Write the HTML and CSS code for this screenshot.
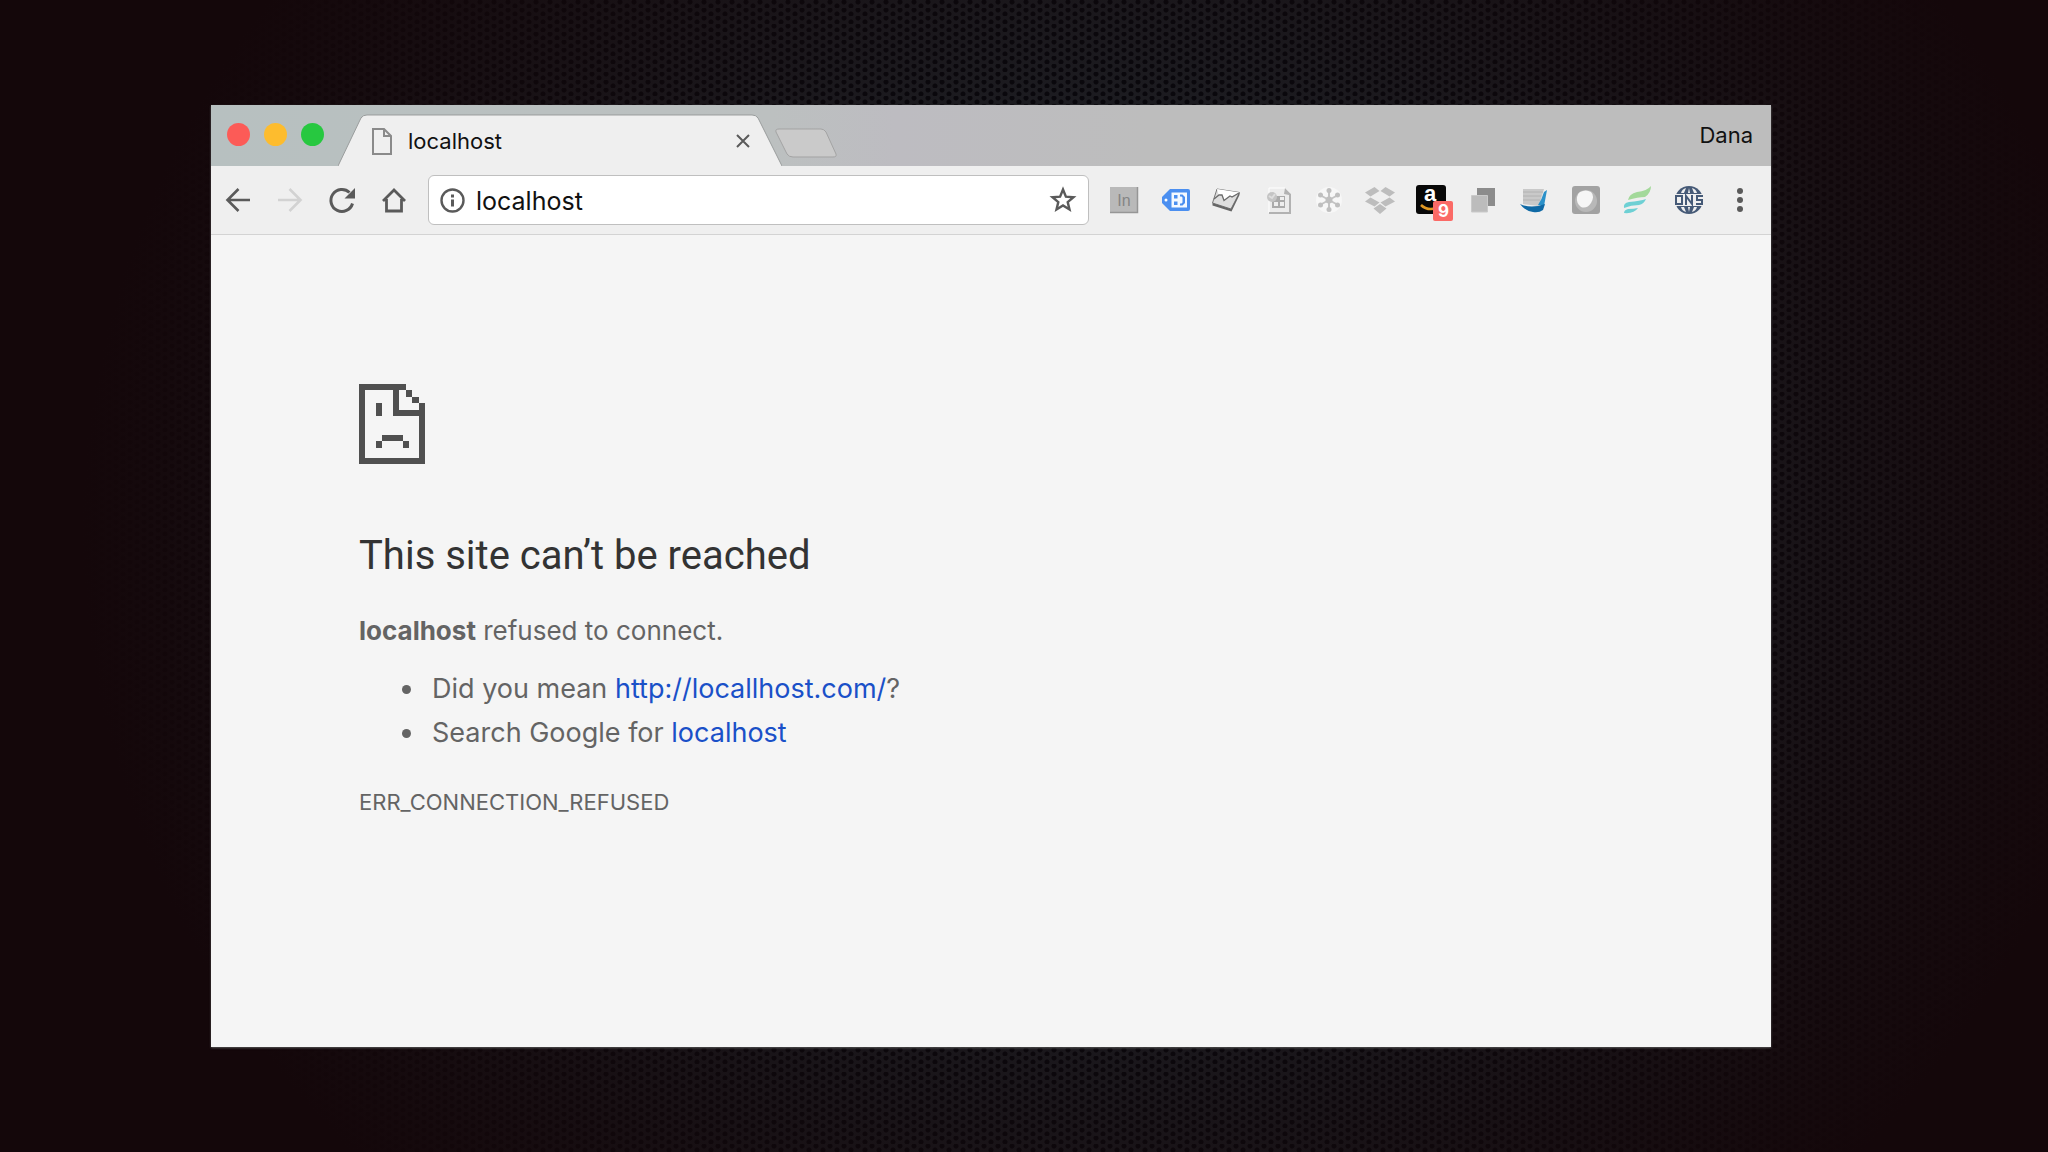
FILE: index.html
```html
<!DOCTYPE html>
<html lang="en">
<head>
    <meta charset="UTF-8">
    <meta name="viewport" content="width=device-width, initial-scale=1.0">
    <title>localhost</title>
    <link rel="stylesheet" href="styles.css">
</head>
<body>
    <div class="window">
        <!-- tab strip -->
        <header class="tab-bar">
            <div class="lights">
                <button class="light red" aria-label="Close window"></button>
                <button class="light yellow" aria-label="Minimize window"></button>
                <button class="light green" aria-label="Zoom window"></button>
            </div>
            <div class="tab">
                <svg class="tab-shape" viewBox="0 0 444 53" preserveAspectRatio="none">
                    <path d="M0 53L23 4Q25 1 29 1H414Q418 1 420 4L444 53" fill="#efefef" stroke="#999c9c"/>
                </svg>
                <svg class="tab-icon" width="20" height="27" viewBox="0 0 20 27" fill="none" stroke="#8a8a8a" stroke-width="2">
                    <path d="M1 1H12L19 8V26H1ZM12 1V8H19"/>
                </svg>
                <span class="tab-title">localhost</span>
                <button class="tab-close" aria-label="Close tab">
                    <svg width="14" height="14" viewBox="0 0 14 14" stroke="#5a5a5a" stroke-width="2"><path d="M1 1L13 13M13 1L1 13"/></svg>
                </button>
            </div>
            <button class="new-tab" aria-label="New tab">
                <svg width="62" height="30" viewBox="0 0 62 30">
                    <path d="M4 1H46Q49 1 51 4L61 26Q62 29 58 29H18Q14 29 12 26L1 4Q0 1 4 1Z" fill="#cacaca" stroke="#a3a3a3"/>
                </svg>
            </button>
            <button class="profile">Dana</button>
        </header>

        <!-- toolbar -->
        <div class="toolbar">
            <nav class="nav">
                <button aria-label="Back">
                    <svg width="30" height="30" viewBox="0 0 30 30" fill="none" stroke="#5a5a5a" stroke-width="2.6"><path d="M27 15H5M15.5 4L4.5 15L15.5 26"/></svg>
                </button>
                <button aria-label="Forward" disabled>
                    <svg width="30" height="30" viewBox="0 0 30 30" fill="none" stroke="#d2d2d2" stroke-width="2.6"><path d="M3 15H25M14.5 4L25.5 15L14.5 26"/></svg>
                </button>
                <button aria-label="Reload">
                    <svg width="30" height="30" viewBox="0 0 30 30"><path d="M25.5 18.5A11 11 0 1 1 22.5 7.5" fill="none" stroke="#5a5a5a" stroke-width="3"/><path d="M28 3V13.5H17.5Z" fill="#5a5a5a"/></svg>
                </button>
                <button aria-label="Home">
                    <svg width="30" height="30" viewBox="0 0 30 30" fill="none" stroke="#5a5a5a" stroke-width="2.8"><path d="M4 16L15 5L26 16M7.5 14V26H22.5V14"/></svg>
                </button>
            </nav>
            <div class="address">
                <svg width="25" height="25" viewBox="0 0 25 25"><circle cx="12.5" cy="12.5" r="11" fill="none" stroke="#5a5a5a" stroke-width="2.4"/><path d="M11 6.5H14V9.5H11ZM11 11.5H14V18.5H11Z" fill="#5a5a5a"/></svg>
                <input type="text" aria-label="Address" value="localhost">
                <button aria-label="Bookmark this page">
                    <svg width="28" height="28" viewBox="0 0 28 28"><path d="M14 3.5L16.9 10.6L24.5 11.2L18.7 16.1L20.5 23.5L14 19.5L7.5 23.5L9.3 16.1L3.5 11.2L11.1 10.6Z" fill="#fff" stroke="#5a5a5a" stroke-width="2.4"/></svg>
                </button>
            </div>
            <div class="extensions">
                <button aria-label="LinkedIn">
                    <svg width="30" height="30" viewBox="-1 0 30 30"><path d="M1 2H29V28H1Z" fill="#b9b9b9"/><path d="M1 27.5H28.5V2" fill="none" stroke="#969696" stroke-width="1.5"/><text x="15" y="21" text-anchor="middle" class="glyph-in">In</text></svg>
                </button>
                <button aria-label="Tag">
                    <svg width="30" height="30" viewBox="-2 0 30 30"><path d="M9 4H27Q29 4 29 6V24Q29 26 27 26H9L1 18V12Z" fill="#4b8ff0"/><circle cx="5" cy="15" r="1.5" fill="#fff"/><path d="M10.5 7.5H26V22.5H10.5Z" fill="#f4f9ff"/><path d="M13 10H16.5V13.5H13ZM13 16.5H16.5V20H13ZM19 9.5H21.5L24 12V18L21.5 20.5H19V18.5H20.5L21.5 17.5V12.5L20.5 11.5H19Z" fill="#4b8ff0"/></svg>
                </button>
                <button aria-label="Mail">
                    <svg width="30" height="30" viewBox="0 0 30 30"><path d="M6 4L28.5 7.5L20 24L1.5 18Z" fill="#dedede" stroke="#777"/><path d="M1.5 18L20 24L28.5 7.5V10L20.5 26.5L1.5 20.5Z" fill="#666"/><path d="M6 4L8 11L11 10L13 15L18 11.5L20 12L28.5 7.5Z" fill="#fff"/><path d="M3 14L8 10L11 10L13 15.5L19 11L21 12L28 8" fill="none" stroke="#6a6a6a" stroke-width="1.3"/></svg>
                </button>
                <button aria-label="Sheets">
                    <svg width="30" height="30" viewBox="-2 0 30 30"><path d="M5 3H21L26 8V28H5Z" fill="#ececec" stroke="#fff"/><path d="M21 3L27 9V29H5V27H25V10L20 9Z" fill="#b2b2b2"/><path d="M8 11H21V23H8Z" fill="#aaa"/><path d="M10 17H14V21H10ZM16 17H20V21H16ZM16 12H20V15H16Z" fill="#eee"/><circle cx="8" cy="12" r="5" fill="#c4c4c4"/><path d="M5 11L8 13L11 9" fill="none" stroke="#ddd" stroke-width="2"/></svg>
                </button>
                <button aria-label="Asterisk">
                    <svg width="30" height="30" viewBox="0 0 30 30"><circle cx="15" cy="15" r="13" fill="#f7f7f7"/><path d="M15 5V25M6 10L24 20M24 10L6 20" stroke="#c3c3c3" stroke-width="2"/><g fill="#bfbfbf"><circle cx="15" cy="15" r="3.5"/><circle cx="15" cy="5.5" r="2.5"/><circle cx="15" cy="24.5" r="2.5"/><circle cx="6.5" cy="10" r="2.5"/><circle cx="23.5" cy="10" r="2.5"/><circle cx="6.5" cy="20" r="2.5"/><circle cx="23.5" cy="20" r="2.5"/></g></svg>
                </button>
                <button aria-label="Dropbox">
                    <svg width="30" height="30" viewBox="0 0 30 30" fill="#bdbdbd"><path d="M9.5 2L14.5 6L5.5 11.5L0 7.5ZM20.5 2L15.5 6L24.5 11.5L30 7.5ZM5.5 12.5L14.5 17.5L9.5 21.5L0 16.5ZM24.5 12.5L15.5 17.5L20.5 21.5L30 16.5ZM15 19L21.5 23.5L15 29L8.5 23.5Z"/></svg>
                </button>
                <button class="amazon" aria-label="Amazon Assistant, 9 alerts">
                    <svg width="30" height="30" viewBox="0 0 30 30"><rect width="30" height="29" rx="3" fill="#080808"/><text x="14" y="16" text-anchor="middle" class="glyph-a">a</text><path d="M5 20Q12 27 24 22" fill="none" stroke="#e29a24" stroke-width="2.5"/></svg>
                    <span class="badge">9</span>
                </button>
                <button aria-label="Tabs">
                    <svg width="30" height="30" viewBox="0 0 30 30"><path d="M9 3H27V21H9Z" fill="#8c8c8c"/><path d="M3.5 10.5H19.5V27H3.5Z" fill="#bcbcbc" stroke="#cacaca"/></svg>
                </button>
                <button aria-label="Reader">
                    <svg width="30" height="30" viewBox="0 0 30 30"><path d="M4 4H25L20 21L4 19Z" fill="#c9c9c9"/><path d="M4 7H24M4 11H22M4 15H21" stroke="#b2b2b2"/><path d="M25 7L28 5L25 21L19 20Q23 14 25 7Z" fill="#2b91c9"/><path d="M1 19Q12 24 26 19L24 25Q20 28 14 27Q6 26 1 19Z" fill="#0f69a5"/></svg>
                </button>
                <button aria-label="Notes">
                    <svg width="30" height="30" viewBox="0 0 30 30"><rect x="1" y="1" width="28" height="28" rx="3" fill="#a2a2a2"/><circle cx="15" cy="16" r="11" fill="#b8b8b8"/><path d="M9 7Q15 4 20 7Q24 11 20 18Q16 24 10 22Q5 18 6 12Q7 8 9 7Z" fill="#f6f6f6"/></svg>
                </button>
                <button aria-label="Feather">
                    <svg width="30" height="30" viewBox="0 0 30 30"><path d="M29 1Q29 8 23 12Q16 12 6 15Q7 9 15 7Q25 6 29 1Z" fill="#a3d99a"/><path d="M24 14Q22 19 17 20Q9 20 2 23Q1 18 7 17Q18 16 24 14Z" fill="#6ed0d4"/><path d="M16 23Q12 29 2 28Q2 25 6 24Q12 24 16 23Z" fill="#6ed0d4"/></svg>
                </button>
                <button aria-label="ONS">
                    <svg width="30" height="30" viewBox="-1 0 30 30"><circle cx="15" cy="15" r="14" fill="#465a77"/><path d="M7 8Q8 4 12 3L10 8ZM14 8L15 3L16 8ZM20 8L18 3Q22 4 23 8ZM7 22Q8 26 12 27L10 22ZM14 22L15 27L16 22ZM20 22L18 27Q22 26 23 22Z" fill="#efefef"/><path d="M0 9H30V21H0Z" fill="#efefef"/><path d="M2 11H8V19H2ZM12 20V11L18 19V10M29 11H23V15H28V19H22" fill="none" stroke="#465a77" stroke-width="2"/></svg>
                </button>
                <button aria-label="Menu">
                    <svg width="30" height="30" viewBox="0 0 30 30" fill="#5a5a5a"><circle cx="15" cy="6" r="3"/><circle cx="15" cy="15" r="3"/><circle cx="15" cy="24" r="3"/></svg>
                </button>
            </div>
        </div>

        <!-- error page -->
        <main class="page">
            <svg class="sad" width="66" height="80" viewBox="0 0 198 240" fill="#505050" shape-rendering="crispEdges">
                <path d="M0 0H141V18H121V78H180V57H198V240H0ZM18 18V222H180V96H102V18Z" fill-rule="evenodd"/>
                <path d="M141 18H159V38H141ZM159 38H180V57H159ZM51 57H70V96H51ZM70 153H131V172H70ZM51 172H70V192H51ZM131 172H150V192H131Z"/>
            </svg>
            <h1>This site can’t be reached</h1>
            <p><strong>localhost</strong> refused to connect.</p>
            <ul>
                <li>Did you mean <a href="http://locallhost.com/">http://locallhost.com/</a>?</li>
                <li>Search Google for <a href="https://www.google.com/search?q=localhost">localhost</a></li>
            </ul>
            <div class="error-code">ERR_CONNECTION_REFUSED</div>
        </main>
    </div>
</body>
</html>
```
FILE: styles.css
```css
* {
    box-sizing: border-box;
}
body {
    margin: 0;
    min-height: 100vh;
    padding: 105px 277px 105px 211px;
    display: flex;
    font-family: Inter, "Liberation Sans", sans-serif;
    background-color: #14070a;
    /* mesh holes under a vignette */
    background-image:
        radial-gradient(ellipse 50% 80% at 54% 46%, rgba(20, 7, 10, 0) 40%, #14070a 100%),
        radial-gradient(circle at 4px 2px, #08080d 2px, transparent 3px),
        radial-gradient(circle at 11px 6px, #08080d 2px, transparent 3px),
        linear-gradient(#1d1e23, #1d1e23);
    background-size: 100% 100%, 14px 8px, 14px 8px, 100% 100%;
}
button {
    padding: 0;
    border: 0;
    background: none;
    font: inherit;
    color: inherit;
}
svg {
    display: block;
}
.window {
    flex: 1;
    display: flex;
    flex-direction: column;
    background: #f5f5f5;
    box-shadow: 0 1px 2px #555;
}

/* tab strip */
.tab-bar {
    display: flex;
    height: 61px;
    padding: 9px 18px 0 16px;
    background: linear-gradient(90deg, #b7c0c0, #bcc0c0 36%, #bdbcc1 44%, #bdbdbd 60%);
}
.lights {
    display: flex;
    gap: 14px;
    padding: 9px 14px 0 0;
}
.light {
    width: 23px;
    height: 23px;
    border-radius: 50%;
}
.red {
    background: #fc5b57;
}
.yellow {
    background: #fdbc2e;
}
.green {
    background: #27c840;
}
.tab {
    position: relative;
    display: flex;
    align-items: center;
    width: 444px;
    padding: 2px 32px 0 34px;
}
.tab-shape {
    position: absolute;
    top: 0;
    left: 0;
    width: 100%;
    height: 100%;
}
.tab-icon,
.tab-title,
.tab-close {
    position: relative;
}
.tab-title {
    flex: 1;
    padding-left: 16px;
    font-size: 22px;
    color: #111;
}
.new-tab {
    align-self: flex-end;
    margin: 0 0 8px -7px;
}
.profile {
    align-self: flex-start;
    margin-left: auto;
    font-size: 22px;
    line-height: 42px;
    color: #111;
}

/* toolbar */
.toolbar {
    display: flex;
    align-items: center;
    gap: 19px;
    height: 69px;
    padding: 0 16px 0 12px;
    background: #efefef;
    border-bottom: 1px solid #d3d3d3;
}
.nav {
    display: flex;
    gap: 22px;
}
.address {
    flex: 1;
    display: flex;
    align-items: center;
    height: 50px;
    padding: 0 11px;
    background: #fff;
    border: 1px solid #bfbfbf;
    border-radius: 6px;
}
.address input {
    flex: 1;
    min-width: 0;
    padding: 2px 11px 0;
    border: 0;
    outline: 0;
    background: none;
    font: inherit;
    font-size: 25px;
    color: #111;
}
.extensions {
    flex: 0 0 647px;
    display: flex;
    justify-content: space-between;
}
.extensions svg {
    overflow: visible;
}
.amazon {
    position: relative;
}
.badge {
    position: absolute;
    left: 17px;
    top: 16px;
    width: 20px;
    border-radius: 2px;
    background: #fb6a66;
    color: #fff;
    font-size: 17px;
    font-weight: bold;
    line-height: 20px;
}
.glyph-in {
    font: 16px "Liberation Sans", sans-serif;
    fill: #858585;
}
.glyph-a {
    font: bold 22px "Liberation Sans", sans-serif;
    fill: #fff;
}

/* error page */
.page {
    padding: 149px 148px 40px;
    font-size: 27px;
    line-height: 44px;
    color: #646464;
}
h1 {
    margin: 66px 0 27px;
    font-family: Roboto, "Liberation Sans", sans-serif;
    font-size: 40px;
    font-weight: normal;
    line-height: 52px;
    color: #333;
}
p {
    margin: 0;
    font-size: 26px;
}
ul {
    margin: 14px 0 25px;
    padding-left: 67px;
}
li {
    padding-left: 6px;
}
a {
    color: #1a50c8;
    text-decoration: none;
}
.error-code {
    font-size: 22px;
}
```
